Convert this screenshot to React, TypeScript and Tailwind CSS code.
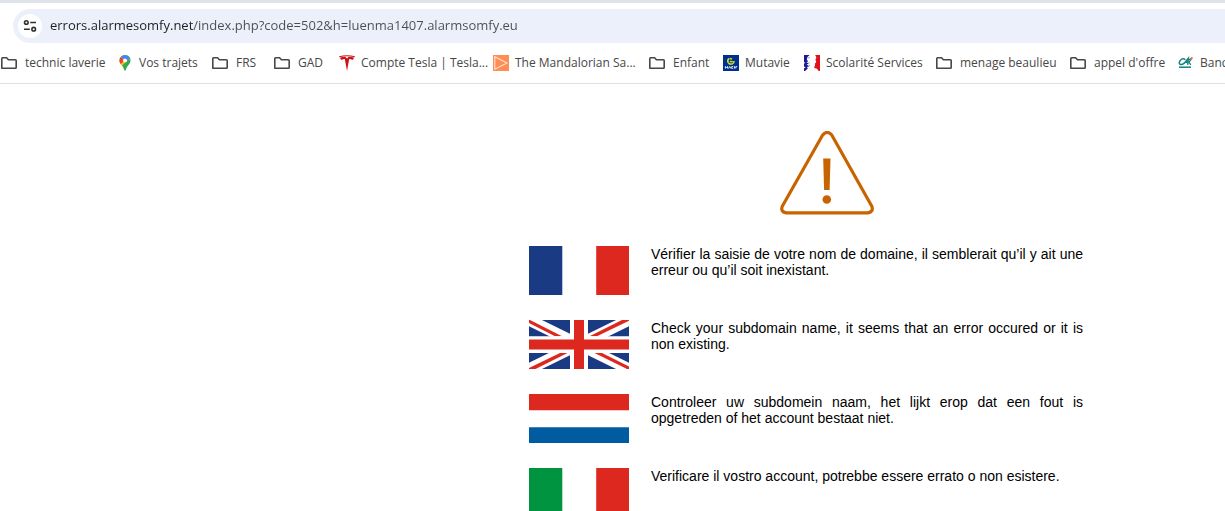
import type { ReactNode } from "react";

function FolderIcon() {
  return (
    <svg viewBox="0 0 18 16" className="h-4 w-[18px]" fill="none" stroke="#474747" strokeWidth="1.6" strokeLinejoin="round" aria-hidden="true">
      <path d="M1.8 13.2V3.6Q1.8 2.8 2.6 2.8H6.6L8.4 4.8H15.4Q16.2 4.8 16.2 5.6V12.4Q16.2 13.2 15.4 13.2H2.6Q1.8 13.2 1.8 12.4Z" />
    </svg>
  );
}

function MapPinIcon() {
  return (
    <svg viewBox="0 0 16 16" className="size-4" aria-hidden="true">
      <clipPath id="pin">
        <path d="M8 0A5.5 5.5 0 0 0 2.5 5.5C2.5 7.5 3.4 8.7 4.9 10.4C6.4 12.2 6.8 13.4 7.2 15.1Q8 16.6 8.8 15.1C9.2 13.4 9.6 12.2 11.1 10.4C12.6 8.7 13.5 7.5 13.5 5.5A5.5 5.5 0 0 0 8 0Z" />
      </clipPath>
      <g clipPath="url(#pin)">
        <path d="M0 0H16V16H0Z" fill="#34a853" />
        <path d="M8 5.5L3 12L0 9V3L4 2Z" fill="#fbbc04" />
        <path d="M8 5.5L2.8 9.4L0 8V2L4 1.8Z" fill="#ea4335" />
        <path d="M8 5.5L3.6 1.8L6 -1H12L14 4L10 5.5L5 11L3.6 9.6Z" fill="#fbbc04" />
        <path d="M3.6 1.8L6 -1H12L14 4L8 5.5Z" fill="#4285f4" />
      </g>
      <circle cx="8" cy="5.5" r="2" fill="#fff" />
    </svg>
  );
}

function TeslaIcon() {
  return (
    <svg viewBox="0 0 16 16" className="size-4" fill="#cc1417" aria-hidden="true">
      <path d="M0 1.2Q8-.9 16 1.2L15.5 2.2Q8 .2.5 2.2Z" />
      <path d="M.9 2.8Q3.3 1.7 6.3 1.8L8 3.5L9.7 1.8Q12.7 1.7 15.1 2.8Q14.4 4.6 13.1 5Q12.6 4 10.2 3.9L8 16L5.8 3.9Q3.4 4 2.9 5Q1.6 4.6.9 2.8Z" />
    </svg>
  );
}

function PlayIcon() {
  return (
    <svg viewBox="0 0 16 16" className="size-4" aria-hidden="true">
      <path d="M0 0H16V16H0Z" fill="#ff8d55" />
      <path d="M1.8 1.8L14 8L1.8 14.2Z" fill="none" stroke="#ffe3d4" strokeWidth="1.1" />
    </svg>
  );
}

function MacifIcon() {
  return (
    <svg viewBox="0 0 16 16" className="size-4" fill="none" aria-hidden="true">
      <path d="M0 0H16V16H0Z" fill="#00308d" />
      <path d="M6.2 3.3Q4 5 5.1 7.4Q6.6 10 9.4 8.8Q11.1 8 11 6" stroke="#c5d92d" strokeWidth="1.6" />
      <path d="M6.8 3.4L9 4.1M7 6.2Q8.5 7.4 9.5 5.8" stroke="#c5d92d" strokeWidth="1.6" />
      <path d="M2.4 13.5V11.4L3.5 12.7L4.6 11.4V13.5M5.6 13.5L6.7 11.4L7.8 13.5M10.2 11.6H8.7V13.3H10.2M11.5 11.2V13.5M12.8 13.5V11.6H14.2" stroke="#e4eaf5" strokeWidth="1" />
    </svg>
  );
}

function MarianneIcon() {
  return (
    <svg viewBox="0 0 16 16" className="size-4" aria-hidden="true">
      <path d="M0 0H5.6L3.5 2L2.8 4.6L4.2 6.5L2.3 7.1L4.8 8.8L2.5 9.5L5.3 11.3L3 12.1L3.8 13.5L1 16H0V13.3L1.8 12.6L0 11.5V8.5L1.3 8L0 7Z" fill="#191996" />
      <path d="M4.2 3.2L5.8 2.3M4.5 7.7L5.7 8M4.8 10.2L6 10.5" stroke="#6666a5" strokeWidth=".7" />
      <path d="M11.2 0H16V16H14.7L13 13.8L10.4 12.9V11.5L11.2 10.2L10.8 8.7L12.3 7L11.4 4.6L12.4 2.5Z" fill="#e1101d" />
    </svg>
  );
}

function CreditAgricoleIcon() {
  return (
    <svg viewBox="0 0 16 16" className="size-4" fill="none" stroke="#138379" aria-hidden="true">
      <path d="M7.4 4.6Q4.5 2.7 2.3 5.4Q.2 8.5 2.3 9.5Q4 10 6.3 8.2L10.3 3.4L9.7 9.8M6.6 7.3H10" strokeWidth="1.5" />
      <path d="M10.5 4.3H13L10.9 7L12.8 9.8" strokeWidth="1.3" />
      <path d="M1 12.2H13" strokeWidth="1.5" />
      <path d="M12.2 4.2L14.5 2.5" stroke="#ee6865" strokeWidth="2" />
    </svg>
  );
}

type Bookmark = { label: string; icon: ReactNode; width: string; folder?: boolean };

const bookmarks: Bookmark[] = [
  { label: "technic laverie", icon: <FolderIcon />, width: "w-[117px]", folder: true },
  { label: "Vos trajets", icon: <MapPinIcon />, width: "w-[94px]" },
  { label: "FRS", icon: <FolderIcon />, width: "w-[62px]", folder: true },
  { label: "GAD", icon: <FolderIcon />, width: "w-[66px]", folder: true },
  { label: "Compte Tesla | Tesla...", icon: <TeslaIcon />, width: "w-[154px]" },
  { label: "The Mandalorian Sa...", icon: <PlayIcon />, width: "w-[155px]" },
  { label: "Enfant", icon: <FolderIcon />, width: "w-[75px]", folder: true },
  { label: "Mutavie", icon: <MacifIcon />, width: "w-[81px]" },
  { label: "Scolarité Services", icon: <MarianneIcon />, width: "w-[131px]" },
  { label: "menage beaulieu", icon: <FolderIcon />, width: "w-[134px]", folder: true },
  { label: "appel d'offre", icon: <FolderIcon />, width: "w-[109px]", folder: true },
  { label: "Banque", icon: <CreditAgricoleIcon />, width: "w-[90px]" },
];

function AddressBar() {
  return (
    <div className="border-t-3 border-[#dee3e9] pt-1.5 pl-[13px]">
      <div className="flex h-[34px] items-center rounded-l-full bg-[#ecf0fa] pl-[5px]">
        <button type="button" aria-label="View site information" className="flex size-6 shrink-0 items-center justify-center rounded-full bg-white">
          <svg viewBox="0 0 14 14" className="size-3.5" fill="none" stroke="#303030" strokeWidth="1.6" aria-hidden="true">
            <circle cx="3.3" cy="3.5" r="1.8" />
            <path d="M7.2 3.5H13M1 10.2H6.8" />
            <circle cx="10.7" cy="10.2" r="1.8" />
          </svg>
        </button>
        <input
          type="text"
          aria-label="Address"
          defaultValue="errors.alarmesomfy.net/index.php?code=502&h=luenma1407.alarmsomfy.eu"
          className="ml-2 min-w-0 flex-1 bg-[linear-gradient(90deg,#1f1f1f_143px,#4a4d52_143px)] bg-clip-text text-[13px] text-transparent outline-none"
        />
      </div>
    </div>
  );
}

function BookmarksBar() {
  return (
    <nav aria-label="Bookmarks" className="flex h-[41px] shrink-0 items-center overflow-hidden border-b border-[#dfe1e3] text-xs text-[#474747]">
      {bookmarks.map((b) =>
        b.folder ? (
          <button key={b.label} type="button" className={`flex shrink-0 items-center gap-[7px] whitespace-nowrap ${b.width}`}>
            {b.icon}
            {b.label}
          </button>
        ) : (
          <a key={b.label} href="#" className={`flex shrink-0 items-center gap-1.5 whitespace-nowrap ${b.width}`}>
            {b.icon}
            {b.label}
          </a>
        ),
      )}
    </nav>
  );
}

function VerticalFlag({ first }: { first: string }) {
  return (
    <svg viewBox="0 0 100 49" className="h-[49px] w-[100px] shrink-0" aria-hidden="true">
      <path d="M0 0H33.3V49H0Z" fill={first} />
      <path d="M67.2 0H100V49H67.2Z" fill="#dc281e" />
    </svg>
  );
}

function DutchFlag() {
  return (
    <svg viewBox="0 0 100 49" className="h-[49px] w-[100px] shrink-0" aria-hidden="true">
      <path d="M0 0H100V16.2H0Z" fill="#dc281e" />
      <path d="M0 33.2H100V49H0Z" fill="#005ba1" />
    </svg>
  );
}

function BritishFlag() {
  return (
    <svg viewBox="0 0 100 49" className="h-[49px] w-[100px] shrink-0" aria-hidden="true">
      <path d="M0 0H100V49H0Z" fill="#1b3a84" />
      <path d="M0 0L100 49M100 0L0 49" stroke="#fff" strokeWidth="11.4" />
      <g fill="#dc281e">
        <path d="M0 0V3L26 16.3H33L1 0Z" />
        <path d="M93 0H100V.8L68 16.3H60.5Z" />
        <path d="M0 49V48L31 33H38.5L6.5 49Z" />
        <path d="M100 49V46.5L73 33H65.5L98 49Z" />
      </g>
      <path d="M41 0H59V49H41ZM0 16.2H100V33H0Z" fill="#fff" />
      <path d="M45 0H55V49H45ZM0 19.4H100V29.4H0Z" fill="#dc281e" />
    </svg>
  );
}

const messages = [
  { lang: "fr", flag: <VerticalFlag first="#1b3a84" />, text: "Vérifier la saisie de votre nom de domaine, il semblerait qu’il y ait une erreur ou qu’il soit inexistant." },
  { lang: "en", flag: <BritishFlag />, text: "Check your subdomain name, it seems that an error occured or it is non existing." },
  { lang: "nl", flag: <DutchFlag />, text: "Controleer uw subdomein naam, het lijkt erop dat een fout is opgetreden of het account bestaat niet." },
  { lang: "it", flag: <VerticalFlag first="#009440" />, text: "Verificare il vostro account, potrebbe essere errato o non esistere." },
];

export default function App() {
  return (
    <div className="flex h-screen flex-col overflow-hidden bg-white font-['Open_Sans','Noto_Sans',sans-serif]">
      <header className="shrink-0">
        <AddressBar />
        <BookmarksBar />
      </header>
      <main className="ml-[529px] flex max-w-[596px] flex-col pt-[47px] font-['Liberation_Sans',Arial,sans-serif] text-sm leading-4 text-black">
        <svg viewBox="0 0 94 84" className="h-[84px] w-[94px] shrink-0 self-center" fill="none" role="img" aria-label="Warning">
          <path d="M42.8 3.8Q47.3-1 51.6 3.8L91.8 75.2Q93.8 80.8 88 81.8H6Q.2 80.8 2.3 75.2Z" stroke="#c86400" strokeWidth="3.2" strokeLinejoin="round" />
          <path d="M43.2 27.5H50.5L49.6 59H44.1Z" fill="#c86400" />
          <circle cx="46.8" cy="68.5" r="4.3" fill="#c86400" />
        </svg>
        <div className="mt-[31px] flex flex-col gap-[25px]">
          {messages.map((m) => (
            <section key={m.lang} lang={m.lang} className="flex items-start gap-[22px]">
              {m.flag}
              <p className="max-w-[432px] flex-1 text-justify">{m.text}</p>
            </section>
          ))}
        </div>
      </main>
    </div>
  );
}
